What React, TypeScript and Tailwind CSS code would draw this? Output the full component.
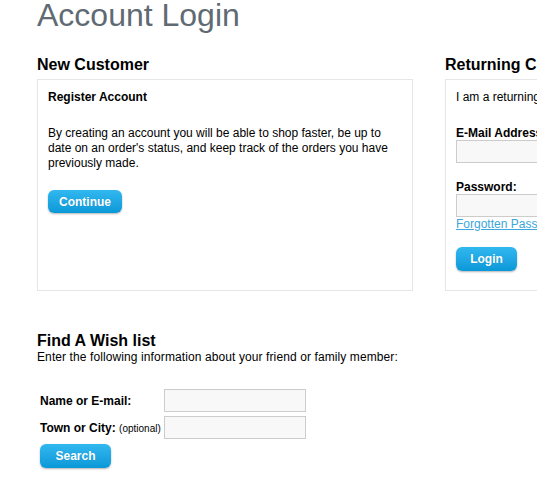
import React from "react";

const btn =
  "flex items-center justify-center rounded-[6px] bg-gradient-to-b from-[#31b8f0] to-[#0898d8] text-white font-bold text-[12px] leading-none shadow-[0_1px_2px_rgba(0,0,0,0.3)] [text-shadow:0_0_1px_rgba(0,0,0,0.15)]";

export default function App() {
  return (
    <div
      className="w-[537px] h-[486px] overflow-hidden bg-white text-[#000] px-[37px]"
      style={{ fontFamily: '"Liberation Sans", Arial, sans-serif' }}
    >
      <h1 className="text-[32px] leading-[30px] text-[#5f6a73] font-normal">Account Login</h1>

      <div className="flex gap-[32px] mt-[26px]">
        {/* New Customer */}
        <div className="w-[376px] shrink-0">
          <h2 className="text-[16px] leading-[18px] font-bold">New Customer</h2>
          <div className="mt-[5px] h-[212px] border border-[#e6e6e6] px-[10px] pt-[10px]">
            <p className="text-[12px] leading-[15px] font-bold">Register Account</p>
            <p className="text-[12px] leading-[15px] mt-[21px]">
              By creating an account you will be able to shop faster, be up to date on an order's status, and keep track
              of the orders you have previously made.
            </p>
            <button className={`${btn} mt-[19px] w-[74px] h-[23px]`}>Continue</button>
          </div>
        </div>

        {/* Returning Customer */}
        <div className="w-[376px] shrink-0">
          <h2 className="text-[16px] leading-[18px] font-bold whitespace-nowrap">Returning Customer</h2>
          <div className="mt-[5px] h-[212px] border border-[#e6e6e6] px-[10px] pt-[10px]">
            <p className="text-[12px] leading-[15px]">I am a returning customer</p>
            <p className="text-[12px] leading-[14px] font-bold mt-[21px]">E-Mail Address:</p>
            <input className="block w-[220px] h-[23px] border border-[#cccccc] bg-[#f8f8f8]" />
            <p className="text-[12px] leading-[14px] font-bold mt-[17px]">Password:</p>
            <input type="password" className="block w-[220px] h-[23px] border border-[#cccccc] bg-[#f8f8f8]" />
            <a href="#" className="block text-[12px] leading-[15px] text-[#3aa6dc] underline">
              Forgotten Password
            </a>
            <button className={`${btn} mt-[15px] w-[61px] h-[24px]`}>Login</button>
          </div>
        </div>
      </div>

      {/* Wish list */}
      <h2 className="text-[16px] leading-[18px] font-bold mt-[41px]">Find A Wish list</h2>
      <p className="text-[12px] leading-[15px] tracking-[0.1px]">
        Enter the following information about your friend or family member:
      </p>

      <div className="mt-[24px] ml-[3px] flex flex-col gap-[4px]">
        <div className="flex items-center">
          <span className="w-[124px] text-[12px] font-bold">Name or E-mail:</span>
          <input className="block w-[142px] h-[23px] border border-[#cccccc] bg-[#f8f8f8]" />
        </div>
        <div className="flex items-center">
          <span className="w-[124px] text-[12px] font-bold whitespace-nowrap">
            Town or City: <span className="text-[10px] font-normal">(optional)</span>
          </span>
          <input className="block w-[142px] h-[23px] border border-[#cccccc] bg-[#f8f8f8]" />
        </div>
        <button className={`${btn} mt-[1px] w-[71px] h-[24px]`}>Search</button>
      </div>
    </div>
  );
}
